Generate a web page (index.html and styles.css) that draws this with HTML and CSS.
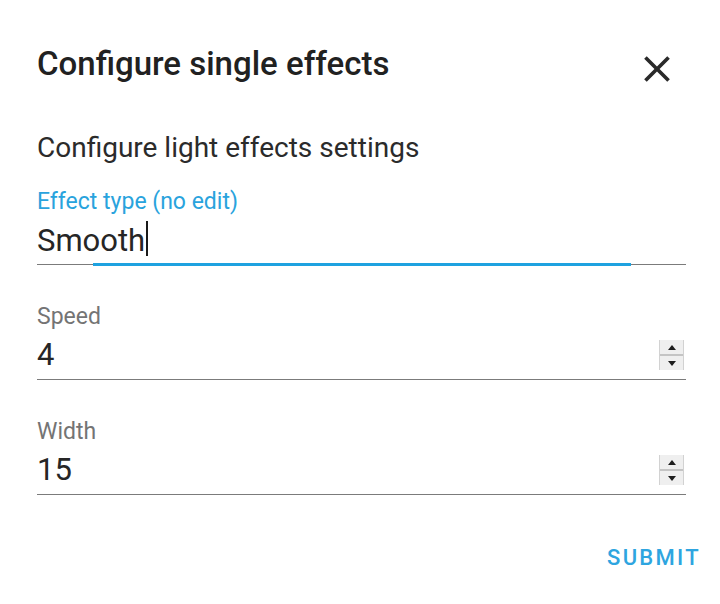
FILE: index.html
```html
<!DOCTYPE html>
<html lang="en">
<head>
    <meta charset="UTF-8">
    <meta name="viewport" content="width=device-width, initial-scale=1.0">
    <title>Configure single effects</title>
    <link rel="stylesheet" href="styles.css">
</head>
<body>
    <div class="dialog">
        <div class="dialog-header">
            <h2 class="dialog-title">Configure single effects</h2>
            <button class="close-btn" aria-label="Close">
                <svg viewBox="0 0 24 24" width="44" height="44">
                    <path d="M19,6.41L17.59,5L12,10.59L6.41,5L5,6.41L10.59,12L5,17.59L6.41,19L12,13.41L17.59,19L19,17.59L13.41,12L19,6.41Z" fill="currentColor"/>
                </svg>
            </button>
        </div>

        <p class="description">Configure light effects settings</p>

        <div class="field focused">
            <label class="field-label">Effect type (no edit)</label>
            <div class="field-value">
                <span>Smooth<span class="caret"></span></span>
            </div>
            <div class="focus-line"></div>
        </div>

        <div class="field">
            <label class="field-label">Speed</label>
            <div class="field-value">
                <span>4</span>
                <div class="spinner">
                    <div class="spin-up"><span class="arrow-up"></span></div>
                    <div class="spin-down"><span class="arrow-down"></span></div>
                </div>
            </div>
        </div>

        <div class="field">
            <label class="field-label">Width</label>
            <div class="field-value">
                <span>15</span>
                <div class="spinner">
                    <div class="spin-up"><span class="arrow-up"></span></div>
                    <div class="spin-down"><span class="arrow-down"></span></div>
                </div>
            </div>
        </div>

        <div class="actions">
            <button class="submit-btn">Submit</button>
        </div>
    </div>
</body>
</html>
```

FILE: styles.css
```css
body {
    margin: 0;
    background: #ffffff;
    font-family: Roboto, "Noto Sans", sans-serif;
    color: #212121;
}
.dialog {
    padding: 44px 34px 0 37px;
}
.dialog-header {
    display: flex;
    justify-content: space-between;
    align-items: flex-start;
}
.dialog-title {
    margin: 0;
    font-size: 33px;
    font-weight: 500;
    line-height: 40px;
    color: #212121;
}
.close-btn {
    margin: 3px 7px 0 0;
    padding: 0;
    border: none;
    background: none;
    color: #2a2a2a;
    width: 44px;
    height: 44px;
    cursor: pointer;
}
.close-btn svg {
    display: block;
}
.description {
    margin: 41px 0 0;
    font-size: 28px;
    line-height: 32px;
    color: #2b2b2b;
}
.field {
    position: relative;
    margin-top: 39px;
    padding-bottom: 6px;
    border-bottom: 1px solid #7b7b7b;
}
.field .field-value {
    margin-top: 7px;
}
.description + .field {
    margin-top: 25px;
    padding-bottom: 5px;
}
.description + .field .field-value {
    margin-top: 6px;
}
.field-label {
    display: block;
    font-size: 23px;
    line-height: 26px;
    color: #747474;
}
.focused .field-label {
    color: #29a3dd;
}
.field-value {
    display: flex;
    justify-content: space-between;
    align-items: center;
    font-size: 31px;
    line-height: 36px;
    color: #262626;
}
.caret {
    display: inline-block;
    width: 2px;
    height: 35px;
    margin-left: 1px;
    background: #1a1a1a;
    vertical-align: -5px;
}
.focus-line {
    position: absolute;
    left: 56px;
    right: 55px;
    bottom: -2px;
    height: 3px;
    background: #1ea2e0;
}
.spinner {
    display: flex;
    flex-direction: column;
    width: 23px;
    height: 30px;
    margin-right: 2px;
    border-left: 1px solid #d2d2d2;
    border-right: 1px solid #d2d2d2;
    background: #efefef;
}
.spin-up,
.spin-down {
    flex: 1;
    display: flex;
    align-items: center;
    justify-content: center;
}
.spin-down {
    border-top: 2px solid #c4c4c4;
}
.arrow-up {
    width: 0;
    height: 0;
    border-left: 4px solid transparent;
    border-right: 4px solid transparent;
    border-bottom: 5px solid #1e1e1e;
}
.arrow-down {
    width: 0;
    height: 0;
    border-left: 4px solid transparent;
    border-right: 4px solid transparent;
    border-top: 5px solid #1e1e1e;
}
.actions {
    display: flex;
    justify-content: flex-end;
    margin: 50px -15px 0 0;
}
.submit-btn {
    padding: 0;
    border: none;
    background: none;
    font-family: Roboto, "Noto Sans", sans-serif;
    font-size: 22px;
    font-weight: 500;
    line-height: 26px;
    letter-spacing: 2.3px;
    text-transform: uppercase;
    color: #2ea5e0;
    cursor: pointer;
}
```
